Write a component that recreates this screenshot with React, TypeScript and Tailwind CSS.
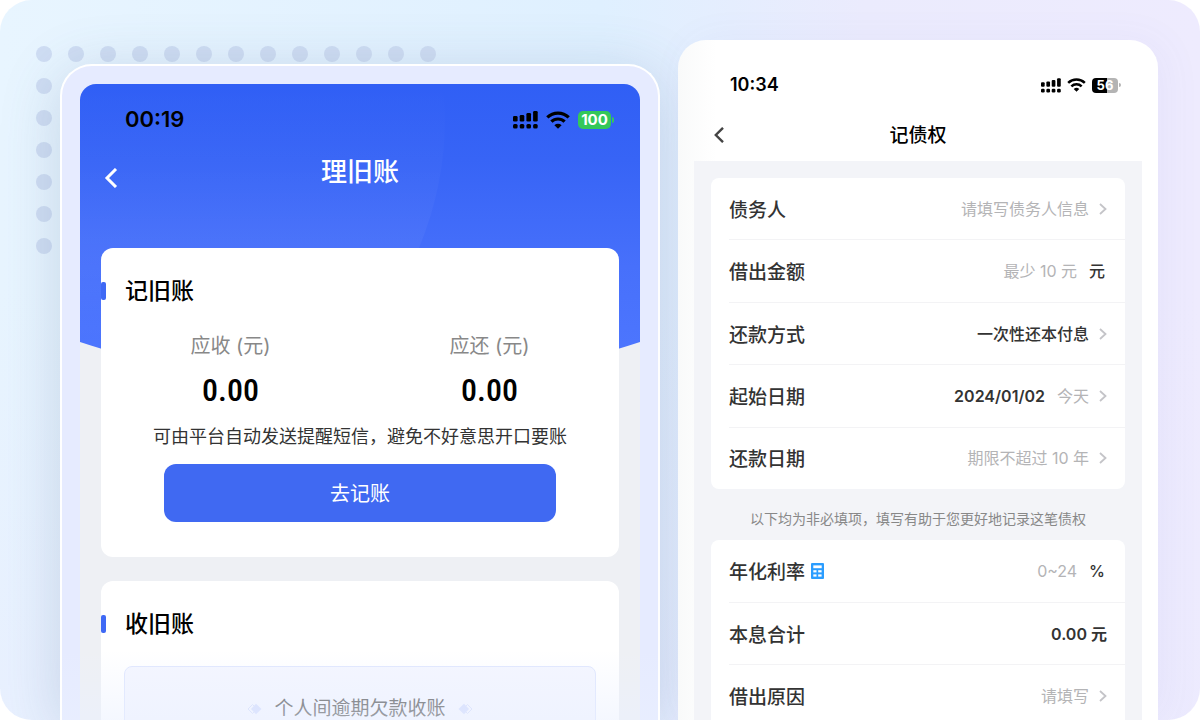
import React from 'react';

interface StatusIconsProps {
  level: number;
  large?: boolean;
}

const SignalIcon: React.FC<{ className: string }> = ({ className }) => (
  <svg viewBox="0 0 25 18" className={className} fill="#000" aria-hidden="true">
    {[0, 1, 2, 3].map((i) => (
      <g key={i}>
        <rect x={i * 6.7} y={[5, 4, 2, 0][i]} width="4.6" height={[5.5, 6.5, 8.5, 10.5][i]} rx="1.3" />
        <rect x={i * 6.7} y="13" width="4.6" height="4.6" rx="1.5" />
      </g>
    ))}
  </svg>
);

const WifiIcon: React.FC<{ className: string }> = ({ className }) => (
  <svg viewBox="0 0 24 18" className={className} aria-hidden="true">
    <g fill="none" stroke="#000" strokeWidth="3.2">
      <path d="M1.3 6.4A15.3 15.3 0 0 1 22.7 6.4" />
      <path d="M5.4 10.7A9.4 9.4 0 0 1 18.6 10.7" />
    </g>
    <path d="M12 17.8 8.4 14.2a5.1 5.1 0 0 1 7.2 0Z" fill="#000" />
  </svg>
);

const StatusIcons: React.FC<StatusIconsProps> = ({ level, large }) => (
  <div className={large ? 'flex items-center gap-2' : 'flex items-center gap-1.5'}>
    <SignalIcon className={large ? 'h-[18px] w-[25px]' : 'h-[15px] w-[20px]'} />
    <WifiIcon className={large ? 'h-[18px] w-6' : 'h-[14px] w-[19px]'} />
    {large ? (
      <div className="flex items-center gap-px">
        <span className="flex h-[18px] w-[33px] items-center justify-center rounded-[5px] bg-[#34c759] text-[15px] leading-none font-bold text-white">
          {level}
        </span>
        <span className="h-1.5 w-0.5 rounded-r-full bg-[#34c759]" />
      </div>
    ) : (
      <div className="flex items-center gap-px">
        <span className="flex h-[15px] w-[26px] items-center justify-center rounded-[4px] bg-linear-to-r from-black from-56% to-[#b4b4b4] to-56% text-[13px] leading-none font-bold text-white">
          {level}
        </span>
        <span className="h-1 w-0.5 rounded-r-full bg-[#b4b4b4]" />
      </div>
    )}
  </div>
);

const BackIcon: React.FC<{ className: string }> = ({ className }) => (
  <svg viewBox="0 0 12 20" className={className} fill="none" stroke="currentColor" strokeWidth="3">
    <path d="M11 1 2 10l9 9" />
  </svg>
);

const Arrow: React.FC = () => (
  <svg viewBox="0 0 8 12" className="ml-2.5 h-3 w-2" fill="none" stroke="#c4c4c8" strokeWidth="1.8" aria-hidden="true">
    <path d="m1 1 5.5 5L1 11" />
  </svg>
);

const CalculatorIcon: React.FC = () => (
  <svg viewBox="0 0 13 16" className="ml-1.5 h-4 w-[13px]" aria-hidden="true">
    <rect width="13" height="16" rx="1" fill="#2b9dff" />
    <g fill="#fff">
      <rect x="2.3" y="2.4" width="8.4" height="2.8" />
      <rect x="2.3" y="7.2" width="3.2" height="2.2" />
      <rect x="7.2" y="7.2" width="3.4" height="2.2" />
      <rect x="2.3" y="11.4" width="3.2" height="2.2" />
      <rect x="7.2" y="11.4" width="3.4" height="2.2" />
    </g>
  </svg>
);

const Ornament: React.FC<{ className?: string }> = ({ className }) => (
  <svg viewBox="0 0 15 12" className={`h-3 w-[15px] ${className ?? ''}`} aria-hidden="true">
    <path d="M5.5 1.5 1 6l4.5 4.5L10 6Z" fill="none" stroke="#d5ddfb" />
    <path d="M9 .8 4 6l5 5.2L14.5 6Z" fill="#d3dcfd" />
  </svg>
);

const SectionTitle: React.FC<{ children: React.ReactNode }> = ({ children }) => (
  <div className="flex items-center">
    <span className="h-[18px] w-[5px] rounded-xs bg-[#3f69f5]" />
    <h2 className="ml-[19px] text-[23px] leading-8 font-medium text-black">{children}</h2>
  </div>
);

const Amount: React.FC<{ label: string; value: string }> = ({ label, value }) => (
  <div className="flex-1 text-center">
    <p className="text-xl leading-8 text-[#888]">{label}</p>
    <p className="mt-2 font-['Roboto_Condensed','Open_Sans_Condensed','Noto_Sans_Condensed','DejaVu_Sans_Condensed',sans-serif] text-[32px] leading-10 font-medium text-black">
      {value}
    </p>
  </div>
);

const OldDebtScreen: React.FC = () => (
  <section className="relative mt-16 min-w-0 flex-[600] rounded-t-[32px] border-2 border-b-0 border-white bg-[#e6ebff] px-[18px] pt-[18px] shadow-[0_10px_60px_rgba(70,100,140,0.22)]">
    <div className="relative h-full overflow-hidden rounded-t-2xl bg-[#eef0f4]">
      {/* Blue header backdrop */}
      <svg viewBox="0 0 560 266" preserveAspectRatio="none" className="absolute top-0 left-0 h-[266px] w-full" aria-hidden="true">
        <defs>
          <linearGradient id="sky" x1="0" y1="0" x2="0" y2="1">
            <stop offset="0" stopColor="#305ff5" />
            <stop offset="0.25" stopColor="#3764f6" />
            <stop offset="0.6" stopColor="#4770fb" />
            <stop offset="1" stopColor="#4f78ff" />
          </linearGradient>
          <linearGradient id="disc" x1="0" y1="0" x2="0" y2="1">
            <stop offset="0" stopColor="#fff" stopOpacity="0" />
            <stop offset="0.6" stopColor="#fff" stopOpacity="0.04" />
            <stop offset="1" stopColor="#fff" stopOpacity="0" />
          </linearGradient>
        </defs>
        <path d="M0 0H560V258Q280 350 0 258Z" fill="url(#sky)" />
        <path d="M0 0H363Q372 84 339 164Q310 225 262 258H0Z" fill="url(#disc)" />
      </svg>

      <div className="relative">
        <div className="flex h-[71px] items-center justify-between pr-[26px] pl-[45px]">
          <span className="text-[22px] font-semibold text-black">00:19</span>
          <StatusIcons level={100} large />
        </div>
        <header className="grid h-[93px] grid-cols-[80px_1fr_80px] items-start">
          <button type="button" aria-label="返回" className="mt-[13px] ml-6 w-5 text-white">
            <BackIcon className="h-5 w-3.5" />
          </button>
          <h1 className="text-center text-[26px] leading-[34px] font-medium text-white">理旧账</h1>
        </header>

        <div className="flex flex-col gap-6 px-[21px]">
          <div className="h-[309px] rounded-xl bg-white pt-[27px]">
            <SectionTitle>记旧账</SectionTitle>
            <div className="mt-[23px] flex">
              <Amount label="应收 (元)" value="0.00" />
              <Amount label="应还 (元)" value="0.00" />
            </div>
            <p className="mt-[13px] text-center text-lg leading-7 text-[#333]">
              可由平台自动发送提醒短信，避免不好意思开口要账
            </p>
            <div className="mt-[13px] px-[63px]">
              <button type="button" className="h-[58px] w-full rounded-xl bg-[#4069f2] pt-0.5 text-xl text-white">
                去记账
              </button>
            </div>
          </div>

          <div className="h-[200px] rounded-xl bg-white pt-[27px]">
            <SectionTitle>收旧账</SectionTitle>
            <div className="mx-[23px] mt-[26px] flex h-40 items-start justify-center gap-3 rounded-lg border border-[#dfe6fe] bg-[#f4f6ff] pt-7">
              <Ornament className="mt-2" />
              <p className="text-[19px] leading-7 text-[#555]">个人间逾期欠款收账</p>
              <Ornament className="mt-2 rotate-180" />
            </div>
          </div>
        </div>
      </div>
    </div>
    {/* Fade at the bottom edge */}
    <div className="absolute inset-x-0 bottom-0 h-[70px] bg-linear-to-b from-[#eef2ff]/0 to-[#eaf0ff]/50" />
  </section>
);

interface RowProps {
  label: string;
  icon?: React.ReactNode;
  last?: boolean;
  children: React.ReactNode;
}

const Row: React.FC<RowProps> = ({ label, icon, last, children }) => (
  <div className={`flex flex-1 items-center justify-between pr-[18px] text-base ${last ? '' : 'border-b border-[#f3f3f5]'}`}>
    <div className="flex items-center">
      <span className="font-['Noto_Sans_CJK_SC',sans-serif] text-[19px] leading-7 font-medium text-[#333]">{label}</span>
      {icon}
    </div>
    <div className="flex items-center">{children}</div>
  </div>
);

const Hint: React.FC<{ children: React.ReactNode }> = ({ children }) => (
  <span className="text-[#b4b4b6]">{children}</span>
);

const Value: React.FC<{ children: React.ReactNode }> = ({ children }) => (
  <span className="font-medium text-[#333]">{children}</span>
);

const Unit: React.FC<{ children: React.ReactNode }> = ({ children }) => (
  <span className="mr-0.5 ml-3 font-medium text-[#333]">{children}</span>
);

const RecordScreen: React.FC = () => (
  <section className="relative mt-10 flex min-w-0 flex-[480] flex-col rounded-t-[28px] bg-linear-to-r from-[#f9fafa] to-white to-8% px-4 shadow-[8px_0_40px_rgba(90,90,190,0.05)]">
    <div className="flex h-[90px] items-center justify-between pr-[21px] pl-9">
      <span className="text-lg font-semibold text-black">10:34</span>
      <StatusIcons level={56} />
    </div>
    <header className="-mt-[18px] grid h-[49px] grid-cols-[60px_1fr_60px] items-center">
      <button type="button" aria-label="返回" className="mb-1 ml-5 w-5 text-[#444]">
        <BackIcon className="h-4 w-2.5" />
      </button>
      <h1 className="text-center text-[19px] font-medium text-black">记债权</h1>
    </header>

    <div className="min-h-0 flex-1 bg-[#f3f4f8] px-[17px] pt-[17px]">
      <div className="flex h-[311px] flex-col rounded-lg bg-white pl-[18px]">
        <Row label="债务人"><Hint>请填写债务人信息</Hint><Arrow /></Row>
        <Row label="借出金额"><Hint>最少 10 元</Hint><Unit>元</Unit></Row>
        <Row label="还款方式"><Value>一次性还本付息</Value><Arrow /></Row>
        <Row label="起始日期">
          <span className="mr-3 font-semibold text-[#333]">2024/01/02</span>
          <Hint>今天</Hint>
          <Arrow />
        </Row>
        <Row label="还款日期" last><Hint>期限不超过 10 年</Hint><Arrow /></Row>
      </div>
      <p className="pt-5 pb-[11px] text-center text-sm leading-5 text-[#888]">
        以下均为非必填项，填写有助于您更好地记录这笔债权
      </p>
      <div className="flex h-[187px] flex-col rounded-lg bg-white pl-[18px]">
        <Row label="年化利率" icon={<CalculatorIcon />}><Hint>0~24</Hint><Unit>%</Unit></Row>
        <Row label="本息合计"><span className="font-semibold text-[#333]">0.00 元</span></Row>
        <Row label="借出原因" last><Hint>请填写</Hint><Arrow /></Row>
      </div>
    </div>
  </section>
);

const App: React.FC = () => (
  <div className="h-screen bg-white font-['Inter','Noto_Sans_CJK_SC',sans-serif]">
    <main className="relative flex h-full gap-[18px] overflow-hidden rounded-[32px] bg-[linear-gradient(to_bottom,transparent_40%,rgba(234,234,255,0.4)),linear-gradient(to_right,#e8f5ff,#dff0ff_50%,#ebebfd_72%,#eeebfe)] pr-[42px] pl-[60px]">
      {/* Dotted corner */}
      <svg className="absolute top-[46px] left-9 h-52 w-[400px]" viewBox="0 0 400 208" fill="#cfddf3" aria-hidden="true">
        {Array.from({ length: 13 }, (_, i) => (
          <circle key={`h${i}`} cx={8 + i * 32} cy="8" r="8" />
        ))}
        {Array.from({ length: 6 }, (_, i) => (
          <circle key={`v${i}`} cx="8" cy={40 + i * 32} r="8" />
        ))}
      </svg>
      <OldDebtScreen />
      <RecordScreen />
    </main>
  </div>
);

export default App;
